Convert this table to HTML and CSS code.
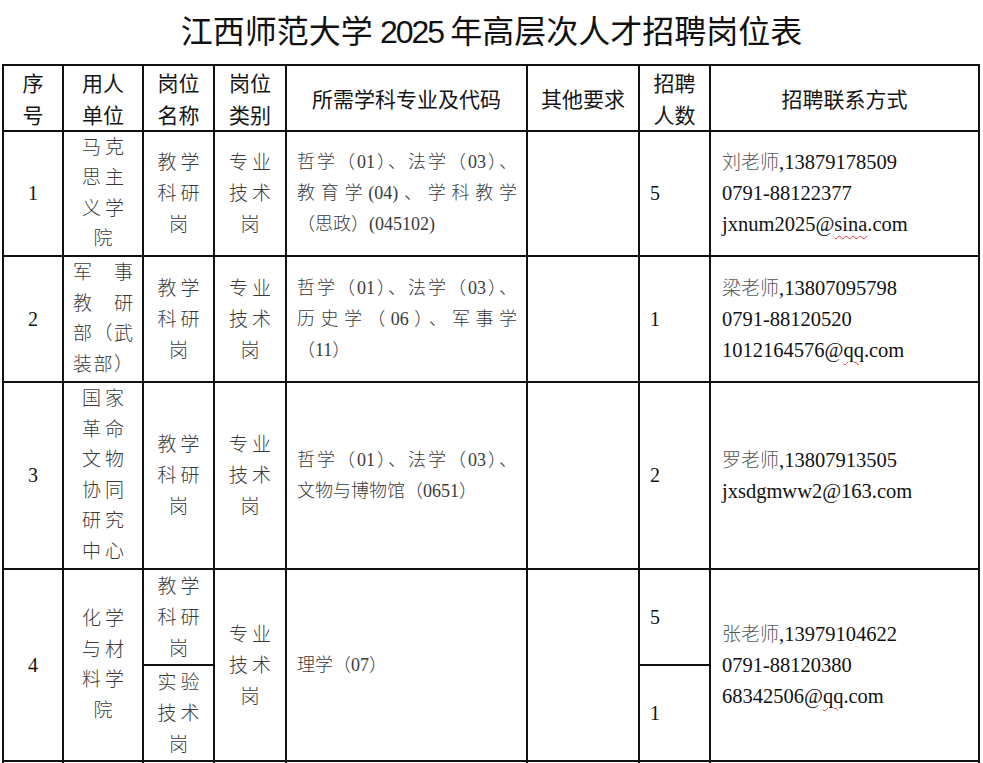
FILE: index.html
```html
<!DOCTYPE html>
<html lang="zh-CN">
<head>
<meta charset="utf-8">
<title>江西师范大学2025年高层次人才招聘岗位表</title>
<link rel="stylesheet" href="styles.css">
</head>
<body>
<h1 class="title">江西师范大学 <span class="yr">2025</span> 年高层次人才招聘岗位表</h1>
<table class="grid">
  <colgroup>
    <col class="c1"><col class="c2"><col class="c3"><col class="c4">
    <col class="c5"><col class="c6"><col class="c7"><col class="c8">
  </colgroup>
  <thead>
    <tr class="rh">
      <th>序<br>号</th>
      <th>用人<br>单位</th>
      <th>岗位<br>名称</th>
      <th>岗位<br>类别</th>
      <th>所需学科专业及代码</th>
      <th>其他要求</th>
      <th>招聘<br>人数</th>
      <th>招聘联系方式</th>
    </tr>
  </thead>
  <tbody>
    <tr class="r1">
      <td class="no">1</td>
      <td class="unit">马克<br>思主<br>义学<br>院</td>
      <td class="stack">教学<br>科研<br>岗</td>
      <td class="stack">专业<br>技术<br>岗</td>
      <td class="major"><div class="jl">哲学（01）、法学（03）、</div><div class="jl">教育学(04)、学科教学</div><div>（思政）(045102)</div></td>
      <td></td>
      <td class="num">5</td>
      <td class="contact"><span class="cj">刘老师</span>,13879178509<br>0791-88122377<br>jxnum2025@<span class="sp">sina</span>.com</td>
    </tr>
    <tr class="r2">
      <td class="no">2</td>
      <td class="unit wide"><div class="jl">军事</div><div class="jl">教研</div><div class="jl">部（武</div><div class="jl">装部）</div></td>
      <td class="stack">教学<br>科研<br>岗</td>
      <td class="stack">专业<br>技术<br>岗</td>
      <td class="major"><div class="jl">哲学（01）、法学（03）、</div><div class="jl">历史学（06）、军事学</div><div>（11）</div></td>
      <td></td>
      <td class="num">1</td>
      <td class="contact"><span class="cj">梁老师</span>,13807095798<br>0791-88120520<br>1012164576@<span class="sp">qq</span>.com</td>
    </tr>
    <tr class="r3">
      <td class="no">3</td>
      <td class="unit">国家<br>革命<br>文物<br>协同<br>研究<br>中心</td>
      <td class="stack">教学<br>科研<br>岗</td>
      <td class="stack">专业<br>技术<br>岗</td>
      <td class="major"><div class="jl">哲学（01）、法学（03）、</div><div>文物与博物馆（0651）</div></td>
      <td></td>
      <td class="num">2</td>
      <td class="contact"><span class="cj">罗老师</span>,13807913505<br>jxsdgmww2@163.com</td>
    </tr>
    <tr class="r4a">
      <td class="no" rowspan="2">4</td>
      <td class="unit" rowspan="2">化学<br>与材<br>料学<br>院</td>
      <td class="stack">教学<br>科研<br>岗</td>
      <td class="stack" rowspan="2">专业<br>技术<br>岗</td>
      <td class="major" rowspan="2">理学（07）</td>
      <td rowspan="2"></td>
      <td class="num">5</td>
      <td class="contact" rowspan="2"><span class="cj">张老师</span>,13979104622<br>0791-88120380<br>68342506@<span class="sp">qq</span>.com</td>
    </tr>
    <tr class="r4b">
      <td class="stack">实验<br>技术<br>岗</td>
      <td class="num">1</td>
    </tr>
    <tr class="r5">
      <td></td><td></td><td></td><td></td><td></td><td></td><td></td><td></td>
    </tr>
  </tbody>
</table>
</body>
</html>
```

FILE: styles.css
```css
html, body {
  margin: 0;
  padding: 0;
  background: #fff;
  overflow: hidden;
}

.title {
  margin: 9px 0 12px;
  font: 400 32px/40px "Noto Sans CJK SC", sans-serif;
  color: #111;
  text-align: center;
}

.title .yr {
  font-family: "Liberation Sans", sans-serif;
  letter-spacing: -2px;
}

.grid {
  margin-left: 2px;
  width: 978px;
  border-collapse: collapse;
  table-layout: fixed;
}

.c1 { width: 60px; }
.c2 { width: 80px; }
.c3 { width: 71px; }
.c4 { width: 72px; }
.c5 { width: 241px; }
.c6 { width: 112px; }
.c7 { width: 71px; }
.c8 { width: 269px; }

.grid th,
.grid td {
  border: 2px solid #111;
  padding: 0;
  vertical-align: middle;
}

.grid th {
  font: 400 21px/32px "Noto Sans CJK SC", sans-serif;
  color: #151515;
  text-align: center;
}

.grid td {
  font: 300 19px/31px "Liberation Serif", "Noto Sans CJK SC", serif;
  color: #3a3a3a;
}

.rh { height: 64px; }
.r1 { height: 125px; }
.r2 { height: 126px; }
.r3 { height: 187px; }
.r4a { height: 96px; }
.r4b { height: 96px; }
.r5 { height: 80px; }

.no {
  text-align: center;
  font-size: 20px !important;
  color: #111 !important;
}

.unit {
  text-align: center;
  letter-spacing: 4px;
  padding-left: 4px !important;
  line-height: 30.5px !important;
}

.unit.wide {
  letter-spacing: 0;
  padding: 0 9px !important;
}

.stack {
  text-align: center;
  letter-spacing: 4px;
  padding-left: 4px !important;
}

.jl {
  text-align: justify;
  text-align-last: justify;
}

.major {
  font-size: 18px !important;
  padding: 0 9px 0 10px !important;
}

.num {
  padding-left: 10px !important;
  font-size: 20px !important;
  color: #111 !important;
}

.contact {
  padding-left: 11px !important;
  font-size: 20.5px !important;
  color: #111 !important;
}

.cj {
  color: #555;
  font-size: 19px;
}

.sp {
  text-decoration: underline wavy #d33;
  text-decoration-thickness: 1px;
  text-underline-offset: 4px;
}
```
